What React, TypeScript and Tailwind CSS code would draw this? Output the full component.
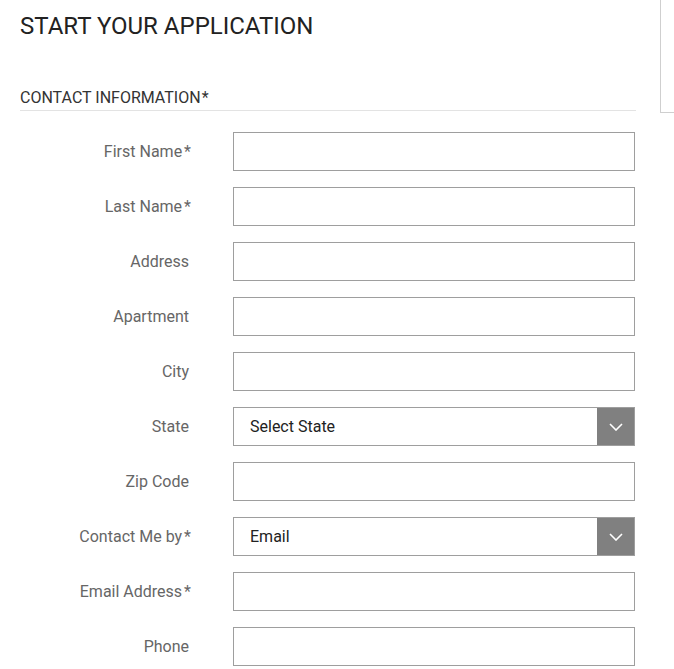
import React from "react";

const rows: { label: string; req?: boolean; type?: "select"; value?: string }[] = [
  { label: "First Name", req: true },
  { label: "Last Name", req: true },
  { label: "Address" },
  { label: "Apartment" },
  { label: "City" },
  { label: "State", type: "select", value: "Select State" },
  { label: "Zip Code" },
  { label: "Contact Me by", req: true, type: "select", value: "Email" },
  { label: "Email Address", req: true },
  { label: "Phone" },
];

function Chevron() {
  return (
    <svg width="14" height="8" viewBox="0 0 14 8" fill="none">
      <path d="M1 1l6 6 6-6" stroke="white" strokeWidth="1.6" />
    </svg>
  );
}

export default function App() {
  return (
    <div className="relative min-h-[669px] w-[674px] bg-white" style={{ fontFamily: "Roboto, 'Liberation Sans', sans-serif" }}>
      <div className="absolute left-[660px] top-0 h-[113px] w-[20px] border-l border-b border-[#cfcfcf]" />
      <div className="pl-[20px] pr-[38px] pt-[10px]">
        <h1 className="text-[24px] leading-[32px] text-[#222]">START YOUR APPLICATION</h1>
        <div className="mt-[46px] border-b border-[#e3e3e3] pb-[2px] text-[16px] leading-[20px] text-[#333]">
          CONTACT INFORMATION<span className="ml-[1px]">*</span>
        </div>
        <div className="mt-[21px] flex flex-col gap-[16px]">
          {rows.map((r) => (
            <div key={r.label} className="flex items-center">
              <div className="w-[173px] pr-[4px] text-right text-[16px] text-[#666]">
                {r.label}
                {r.req ? <span className="ml-[2px] mr-[-2px]">*</span> : null}
              </div>
              <div className="ml-[40px] flex h-[39px] w-[402px] items-center border border-[#9e9e9e] bg-white">
                {r.type === "select" ? (
                  <>
                    <div className="flex-1 pl-[16px] text-[16px] text-[#222]">{r.value}</div>
                    <div className="flex h-full w-[37px] items-center justify-center bg-[#808080]">
                      <Chevron />
                    </div>
                  </>
                ) : null}
              </div>
            </div>
          ))}
        </div>
      </div>
    </div>
  );
}
